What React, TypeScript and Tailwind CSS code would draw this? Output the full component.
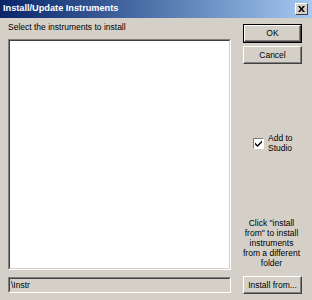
import React from 'react';

const font = { fontFamily: '"Liberation Sans", Arial, sans-serif' };

const Win98Button = ({ label, isDefault, h = 'h-[19px]' }: { label: string; isDefault?: boolean; h?: string }) => (
  <button
    className={`w-[59px] ${h} bg-[#d4d0c8] text-[8.5px] text-black flex items-center justify-center ${
      isDefault ? 'border border-black' : ''
    }`}
  >
    <span className="w-full h-full flex items-center justify-center border border-t-white border-l-white border-r-[#404040] border-b-[#404040] shadow-[inset_-1px_-1px_0_#808080]">
      {label}
    </span>
  </button>
);

const App = () => {
  return (
    <div className="w-[312px] h-[300px] bg-[#d4d0c8] flex flex-col select-none overflow-hidden" style={font}>
      <div className="h-[18px] flex items-center justify-between pl-[3px] pr-[4px] bg-gradient-to-r from-[#0a246a] to-[#a6caf0]">
        <span className="text-white font-bold text-[9.2px]">Install/Update Instruments</span>
        <div className="w-[13px] h-[12px] bg-[#d4d0c8] border border-t-white border-l-white border-r-[#404040] border-b-[#404040] flex items-center justify-center">
          <svg width="7" height="6" viewBox="0 0 7 6">
            <path d="M0 0h2l1.5 2L5 0h2L4.5 3 7 6H5L3.5 4 2 6H0l2.5-3z" fill="#000" />
          </svg>
        </div>
      </div>

      <div className="flex flex-1">
        <div className="w-[231px] pl-[8px] flex flex-col">
          <div className="text-[8.5px] text-black mt-[3px] h-[18px]">Select the instruments to install</div>
          <div className="h-[231px] bg-white border border-t-[#808080] border-l-[#808080] border-r-white border-b-white">
            <div className="w-full h-full border border-t-[#404040] border-l-[#404040] border-r-[#d4d0c8] border-b-[#d4d0c8]" />
          </div>
          <div className="mt-[7px] h-[16px] border border-t-[#808080] border-l-[#808080] border-r-white border-b-white">
            <div className="w-full h-full border border-t-[#404040] border-l-[#404040] border-r-[#d4d0c8] border-b-[#d4d0c8] flex items-center pl-[1px] text-[8.5px] text-black">
              \Instr
            </div>
          </div>
        </div>

        <div className="flex-1 pl-[12px] flex flex-col">
          <div className="mt-[6px] flex flex-col gap-[3px]">
            <Win98Button label="OK" isDefault />
            <Win98Button label="Cancel" h="h-[18px]" />
          </div>
          <div className="mt-[69px] ml-[10px] flex items-center gap-[4px] h-[20px]">
            <div className="w-[11px] h-[11px] bg-white border border-t-[#808080] border-l-[#808080] border-r-white border-b-white flex items-center justify-center">
              <svg width="7" height="7" viewBox="0 0 7 7">
                <path d="M0 2.5l2.5 2.5L7 0.5V2.5L2.5 7L0 4.5z" fill="#000" />
              </svg>
            </div>
            <div className="text-[8.5px] leading-[10px] text-black">
              Add to
              <br />
              Studio
            </div>
          </div>
          <div className="mt-[65px] -ml-[12px] text-center text-[8.5px] leading-[10px] text-black">
            Click "install
            <br />
            from" to install
            <br />
            instruments
            <br />
            from a different
            <br />
            folder
          </div>
          <div className="mt-[8px]">
            <Win98Button label="Install from..." h="h-[18px]" />
          </div>
        </div>
      </div>
    </div>
  );
};

export default App;
